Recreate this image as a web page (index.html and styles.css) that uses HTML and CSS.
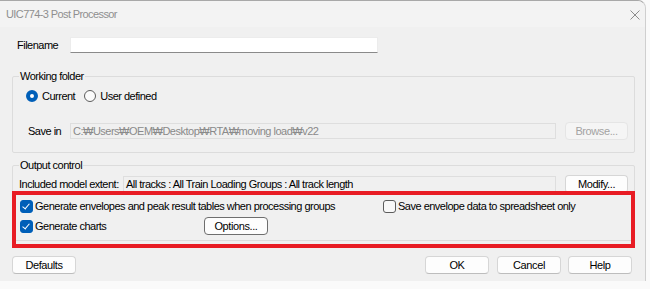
FILE: index.html
```html
<!DOCTYPE html>
<html lang="en">
<head>
    <meta charset="UTF-8">
    <title>UIC774-3 Post Processor</title>
    <link rel="stylesheet" href="styles.css">
</head>
<body>
    <div class="window">
        <div class="titlebar">
            <span class="title">UIC774-3 Post Processor</span>
            <svg class="close" width="10" height="10" viewBox="0 0 10 10">
                <path d="M0.5 0.5 L9.5 9.5 M9.5 0.5 L0.5 9.5" stroke="#8c8c8c" stroke-width="1" fill="none"/>
            </svg>
        </div>

        <div class="content">
            <div class="row filename-row">
                <span class="lbl lbl-filename">Filename</span>
                <div class="field field-edit"></div>
            </div>

            <fieldset class="group group-folder">
                <legend>Working folder</legend>
                <div class="radios">
                    <span class="radio on"></span><span class="opt">Current</span>
                    <span class="radio"></span><span class="opt">User defined</span>
                </div>
                <div class="row save-row">
                    <span class="lbl lbl-save">Save in</span>
                    <div class="field field-disabled field-path">C:₩Users₩OEM₩Desktop₩RTA₩moving load₩v22</div>
                    <button class="btn btn-disabled">Browse...</button>
                </div>
            </fieldset>

            <fieldset class="group group-output">
                <legend>Output control</legend>
                <div class="row extent-row">
                    <span class="lbl lbl-extent">Included model extent:</span>
                    <div class="field field-disabled field-extent">All tracks : All Train Loading Groups : All track length</div>
                    <button class="btn">Modify...</button>
                </div>
                <div class="checks">
                    <div class="check-item">
                        <span class="check on"></span>Generate envelopes and peak result tables when processing groups
                    </div>
                    <div class="check-item">
                        <span class="check"></span>Save envelope data to spreadsheet only
                    </div>
                    <div class="check-item charts">
                        <span class="check on"></span><span class="charts-lbl">Generate charts</span>
                        <button class="btn btn-options">Options...</button>
                    </div>
                </div>
            </fieldset>

            <div class="footer">
                <button class="btn">Defaults</button>
                <span class="spacer"></span>
                <button class="btn">OK</button>
                <button class="btn">Cancel</button>
                <button class="btn btn-help">Help</button>
            </div>
        </div>

        <div class="highlight"></div>
    </div>
</body>
</html>
```

FILE: styles.css
```css
body {
    margin: 0;
    background: #fafafa;
    font-family: "Liberation Sans", Arial, sans-serif;
    font-size: 11px;
    letter-spacing: -0.5px;
    color: #000;
    white-space: nowrap;
}
.window {
    position: relative;
    width: 645px;
    height: 280px;
    background: #f0f0f0;
    border-top: 1px solid #a8a8a8;
    border-right: 1px solid #cfcfcf;
    border-top-right-radius: 8px;
}
.titlebar {
    height: 26px;
    display: flex;
    align-items: center;
    justify-content: space-between;
    padding: 0 5px 0 6px;
    background: #f3f3f3;
    border-top-right-radius: 8px;
}
.title {
    color: #8f8f8f;
    font-size: 11px;
    letter-spacing: -0.6px;
}
.close {
    margin-top: 1px;
}
.content {
    padding: 10px 10px 0 12px;
}
.row {
    display: flex;
    align-items: center;
}
.lbl {
    line-height: 14px;
}
.lbl-filename {
    width: 53px;
    margin-left: 5px;
}
.field {
    box-sizing: border-box;
    height: 16px;
    line-height: 14px;
    padding: 0 2px;
    border: 1px solid #dedede;
    overflow: hidden;
}
.field-edit {
    width: 308px;
    background: #fff;
    border-color: #ececec;
    border-bottom-color: #8a8a8a;
}
.field-disabled {
    background: #f0f0f0;
}
.field-path {
    width: 486px;
    color: #8a8a8a;
}
.field-extent {
    width: 433px;
}
.group {
    margin: 0;
    padding: 0 6px;
    border: 1px solid #dcdcdc;
    border-radius: 2px;
}
.group legend {
    padding: 0 1px;
    line-height: 14px;
}
.group-folder {
    margin-top: 16px;
    padding-top: 6px;
    padding-bottom: 12px;
}
.group-output {
    margin-top: 5px;
    padding-top: 3px;
    padding-bottom: 5px;
}
.radios {
    display: flex;
    align-items: center;
    height: 14px;
    margin-left: 7px;
}
.radio {
    box-sizing: border-box;
    width: 12px;
    height: 12px;
    border-radius: 50%;
    border: 1px solid #5c5c5c;
    background: #fbfbfb;
    margin-right: 4px;
}
.radio.on {
    border: 4px solid #005fb8;
    background: #fff;
}
.opt {
    margin-right: 9px;
}
.save-row {
    margin-top: 19px;
    margin-left: 9px;
}
.lbl-save {
    width: 42px;
}
.btn {
    box-sizing: border-box;
    width: 64px;
    height: 18px;
    padding: 0;
    font-family: inherit;
    font-size: 11px;
    letter-spacing: -0.4px;
    color: #000;
    background: #fdfdfd;
    border: 1px solid #d6d6d6;
    border-bottom-color: #bdbdbd;
    border-radius: 4px;
}
.btn-disabled {
    background: #f5f5f5;
    border-color: #e5e5e5;
    color: #a3a3a3;
}
.save-row .btn,
.extent-row .btn {
    width: 63px;
    margin-left: auto;
}
.lbl-extent {
    width: 104px;
}
.checks {
    display: grid;
    grid-template-columns: 363px auto;
    row-gap: 4px;
    margin-top: 6px;
    margin-left: 1px;
}
.check-item {
    display: flex;
    align-items: center;
    height: 14px;
}
.check-item.charts {
    height: 18px;
}
.check {
    box-sizing: border-box;
    width: 13px;
    height: 13px;
    border: 1px solid #5c5c5c;
    border-radius: 3px;
    background: #f8f8f8;
    margin-right: 2px;
    position: relative;
}
.check.on {
    border-color: #005fb8;
    background: #005fb8;
}
.check.on::after {
    content: "";
    position: absolute;
    left: 3px;
    top: 1px;
    width: 3px;
    height: 6px;
    border: solid #fff;
    border-width: 0 1px 1px 0;
    transform: rotate(40deg);
}
.charts-lbl {
    width: 169px;
}
.btn-options {
    border-color: #6e6e6e;
}
.footer {
    display: flex;
    gap: 8px;
    margin-top: 15px;
}
.spacer {
    flex: 1;
}
.btn-help {
    margin-left: -1px;
    margin-right: 3px;
}
.highlight {
    position: absolute;
    left: 12px;
    top: 190px;
    width: 623px;
    height: 57px;
    box-sizing: border-box;
    border: 4px solid #e81c24;
    pointer-events: none;
}
```
